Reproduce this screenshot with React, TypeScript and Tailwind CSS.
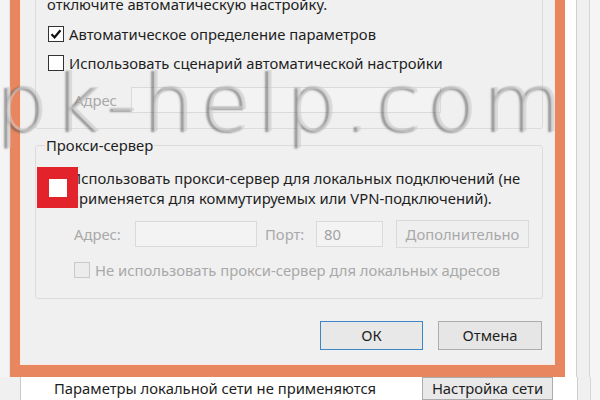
function Box({ checked = false, disabled = false }: { checked?: boolean; disabled?: boolean }) {
  return (
    <div
      className={
        "flex h-[16px] w-[16px] shrink-0 items-center justify-center border " +
        (disabled ? "border-[#c9c9c9] bg-[#ececec]" : "border-[#333333] bg-white")
      }
    >
      {checked && (
        <svg width="12" height="12" viewBox="0 0 12 12">
          <path d="M1.5 6.2 L4.6 9.3 L10.5 2.3" fill="none" stroke="#111" strokeWidth="2.2" />
        </svg>
      )}
    </div>
  );
}

function Field({ w, children }: { w: string; children?: React.ReactNode }) {
  return (
    <div className={"flex h-[26px] items-center border border-[#dadada] bg-[#f3f3f3] px-[7px] text-[#a3a3a3] " + w}>
      {children}
    </div>
  );
}

export default function App() {
  return (
    <div className="relative h-[400px] w-[600px] overflow-hidden bg-[#f2f2f2] font-['Noto_Sans',sans-serif] text-[14.8px] text-[#1e1e1e]">
      <div className="flex h-[377px]">
        <div className="w-[10px] border-r border-[#e6e6e6] bg-[#f4f4f4]" />
        <div className="flex w-[555px] flex-col border-x-[10px] border-b-[12px] border-[#e8875f]">
          <div className="flex flex-1 flex-col border-x border-b border-[#fbe9e1] bg-[#f0f0f0]">
            {/* автоматическая настройка */}
            <div className="ml-[14px] flex h-[129px] w-[508px] flex-col rounded-b-[3px] border-x border-b border-[#dcdcdc]">
              <div className="mt-[-6px] pl-[11px] leading-[20px]">отключите автоматическую настройку.</div>
              <div className="mt-[10px] flex h-[20px] items-center gap-[5px] pl-[12px]">
                <Box checked />
                <span>Автоматическое определение параметров</span>
              </div>
              <div className="mt-[9px] flex h-[20px] items-center gap-[5px] pl-[12px]">
                <Box />
                <span>Использовать сценарий автоматической настройки</span>
              </div>
              <div className="mt-[14px] flex items-center pl-[38px] text-[#a9a9a9]">
                <span className="w-[57px]">Адрес</span>
                <Field w="w-[310px]" />
              </div>
            </div>

            {/* прокси-сервер */}
            <div className="relative ml-[14px] mt-[16px] flex h-[154px] w-[508px] flex-col rounded-[3px] border border-[#dcdcdc]">
              <span className="absolute left-[9px] top-[-11px] bg-[#f0f0f0] px-[1px] leading-[20px]">Прокси-сервер</span>
              <div className="mt-[22px] pl-[34px] leading-[20px]">
                <div>Использовать прокси-сервер для локальных подключений (не</div>
                <div>применяется для коммутируемых или VPN-подключений).</div>
              </div>
              <div className="absolute left-[1px] top-[21px] flex h-[41px] w-[41px] items-center justify-center bg-[#e3232c]">
                <div className="h-[18px] w-[18px] bg-white" />
              </div>
              <div className="mt-[12px] flex items-center pl-[38px] text-[#a9a9a9]">
                <span className="w-[61px]">Адрес:</span>
                <Field w="w-[122px]" />
                <span className="ml-[8px] w-[51px]">Порт:</span>
                <Field w="w-[67px]">80</Field>
                <div className="ml-[13px] flex h-[28px] w-[133px] items-center justify-center border border-[#dadada] bg-[#efefef]">
                  Дополнительно
                </div>
              </div>
              <div className="mt-[12px] flex h-[20px] items-center gap-[5px] pl-[38px] text-[#a9a9a9]">
                <Box disabled />
                <span>Не использовать прокси-сервер для локальных адресов</span>
              </div>
            </div>

            <div className="ml-[299px] mt-[22px] flex gap-[15px]">
              <button className="h-[29px] w-[103px] border border-[#3c86c8] bg-[#e8e8e8]">ОК</button>
              <button className="h-[29px] w-[104px] border border-[#acacac] bg-[#e6e6e6]">Отмена</button>
            </div>
          </div>
        </div>
        <div className="flex flex-1">
          <div className="w-[11px] bg-white" />
          <div className="w-[13px] border-l border-[#cfcfcf] bg-[#f0f0f0]" />
          <div className="flex-1 border-l border-[#d6d6d6] bg-[#f5f5f5]" />
        </div>
      </div>

      <div className="flex h-[23px]">
        <div className="w-[21px] border-r border-[#c9c9c9] bg-[#f0f0f0]" />
        <div className="flex w-[401px] items-center bg-white pl-[33px]">Параметры локальной сети не применяются</div>
        <div className="flex w-[131px] items-center justify-center border border-[#acacac] bg-[#e9e9e9]">Настройка сети</div>
        <div className="w-[24px] bg-white" />
        <div className="w-[13px] border-l border-[#cfcfcf] bg-[#f0f0f0]" />
        <div className="flex-1 border-l border-[#d6d6d6] bg-[#f5f5f5]" />
      </div>

      {/* водяной знак */}
      <div className="pointer-events-none absolute left-[-2px] top-[64px] font-['DejaVu_Sans',sans-serif] text-[80px] font-extralight leading-none tracking-[7px] text-[rgba(205,205,205,0.6)] [text-shadow:-3px_1px_2px_rgba(80,80,80,0.55)]">
        pk-help.com
      </div>
    </div>
  );
}
